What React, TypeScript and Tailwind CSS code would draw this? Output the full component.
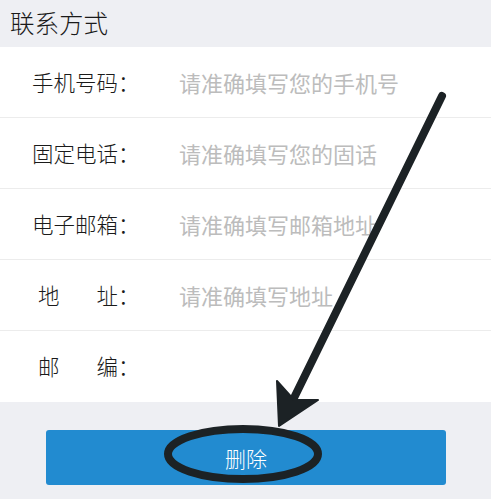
const rows = [
  { label: ["手机号码"], placeholder: "请准确填写您的手机号" },
  { label: ["固定电话"], placeholder: "请准确填写您的固话" },
  { label: ["电子邮箱"], placeholder: "请准确填写邮箱地址" },
  { label: ["地", "址"], placeholder: "请准确填写地址" },
  { label: ["邮", "编"], placeholder: "" },
];

const App = () => {
  return (
    <div
      className="relative w-full h-[499px] bg-[#eeeff3] overflow-hidden font-light"
      style={{ fontFamily: '"Noto Sans CJK SC", "Noto Sans", sans-serif' }}
    >
      <div className="h-[47px] flex items-center pl-[10px] text-[24.5px] text-[#1a1a1a]">
        联系方式
      </div>

      <div className="bg-white">
        {rows.map((row, i) => (
          <div
            key={i}
            className={`h-[71px] flex items-center text-[21.5px] ${
              i < rows.length - 1 ? "border-b border-[#ececec]" : ""
            }`}
          >
            <div className="w-[179px] pl-[32px] flex items-center text-[#1a1a1a]">
              {row.label.length === 1 ? (
                <span>{row.label[0]}</span>
              ) : (
                <span className="flex w-[86px]">
                  <span className="ml-[6px]">{row.label[0]}</span>
                  <span className="ml-auto">{row.label[1]}</span>
                </span>
              )}
              <span>：</span>
            </div>
            <input
              className="flex-1 bg-transparent outline-none text-[22px] font-normal placeholder:text-[#bcbcbc] text-[#222]"
              placeholder={row.placeholder}
            />
          </div>
        ))}
      </div>

      <div className="pt-[28px] px-[46px] pr-[45px]">
        <button className="w-full h-[55px] rounded-[3px] bg-[#228bd0] text-white text-[21px] flex items-center justify-center pt-[2px]">
          删除
        </button>
      </div>

      <svg
        className="absolute inset-0 pointer-events-none"
        width="491"
        height="499"
        viewBox="0 0 491 499"
      >
        <line
          x1="442"
          y1="96"
          x2="292"
          y2="402"
          stroke="#1c2225"
          strokeWidth="8"
          strokeLinecap="round"
        />
        <polygon
          points="277,381 294,400 318,400 279,426"
          fill="#1c2225"
          stroke="#1c2225"
          strokeWidth="2"
          strokeLinejoin="round"
        />
        <ellipse
          cx="243"
          cy="454"
          rx="75"
          ry="25"
          fill="none"
          stroke="#1c2225"
          strokeWidth="8"
        />
      </svg>
    </div>
  );
};

export default App;
